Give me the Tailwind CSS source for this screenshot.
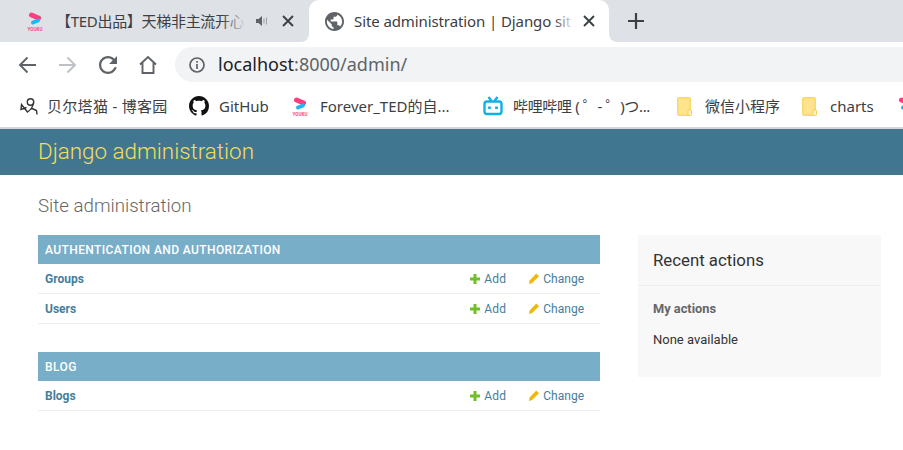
<!DOCTYPE html>
<html lang="en">
<head>
    <meta charset="utf-8"/>
    <title>Site administration | Django site admin</title>
    <script src="https://cdn.jsdelivr.net/npm/@tailwindcss/browser@4"></script>
</head>
<body class="w-[903px] h-[450px] overflow-hidden bg-white font-['Roboto',sans-serif]">
    <!-- tab strip -->
    <div class="h-[42px] bg-[#dee1e6] flex items-stretch font-['Noto_Sans','Noto_Sans_CJK_SC',sans-serif] text-[15px] text-[#3c4043]">
        <div class="w-[309px] flex items-center pl-[27px]">
            <svg class="w-[18px] h-[22px] shrink-0" viewBox="0 0 18 22">
                <path d="M4.500 5 L11.500 8" stroke="#ff3d7f" stroke-width="5" stroke-linecap="round"/>
                <path d="M11 10.500 L6 12.500" stroke="#1fb6f5" stroke-width="4" stroke-linecap="round"/>
                <text x="0.500" y="20.500" font-size="4.600" font-weight="700" fill="#f5488c" font-family="Roboto">YOUKU</text>
            </svg>
            <div class="relative ml-[11px] w-[190px] whitespace-nowrap tracking-[-0.3px]">【TED出品】天梯非主流开心
                <div class="absolute right-0 top-0 h-full w-6 bg-gradient-to-r from-transparent to-[#dee1e6]"></div>
            </div>
            <svg class="ml-[9px] w-[14px] h-[14px] shrink-0" viewBox="0 0 14 14" fill="#5f6368">
                <path d="M1 5h2.500L7 2v10L3.500 9H1z"/>
                <path d="M8.500 4.500h1v5h-1zM11 3.500h1v7h-1z" fill="#9aa0a6"/>
            </svg>
            <svg class="ml-[13px] w-[12px] h-[12px] shrink-0" viewBox="0 0 12 12" stroke="#3c4043" stroke-width="1.900">
                <path d="M1 1l10 10M11 1L1 11"/>
            </svg>
        </div>
        <!-- active tab -->
        <div class="relative w-[300px] bg-white rounded-t-[10px] flex items-center pl-[16px]">
            <div class="absolute -left-2 bottom-0 w-2 h-2 bg-white"><div class="w-full h-full bg-[#dee1e6] rounded-br-lg"></div></div>
            <div class="absolute -right-2 bottom-0 w-2 h-2 bg-white"><div class="w-full h-full bg-[#dee1e6] rounded-bl-lg"></div></div>
            <svg class="w-[19px] h-[19px] shrink-0" viewBox="2 2 20 20" fill="#5f6368">
                <path d="M12 2C6.480 2 2 6.480 2 12s4.480 10 10 10 10-4.480 10-10S17.520 2 12 2zm-1 17.930c-3.950-.490-7-3.850-7-7.930 0-.620.080-1.210.210-1.790L9 15v1c0 1.100.900 2 2 2v1.930zm6.900-2.540c-.260-.810-1-1.390-1.900-1.390h-1v-3c0-.550-.450-1-1-1H8v-2h2c.550 0 1-.450 1-1V7h2c1.100 0 2-.900 2-2v-.410c2.930 1.190 5 4.060 5 7.410 0 2.080-.800 3.970-2.100 5.390z"/>
            </svg>
            <div class="relative ml-[10px] w-[220px] whitespace-nowrap tracking-[-0.1px]">Site administration | Django sit
                <div class="absolute right-0 top-0 h-full w-5 bg-gradient-to-r from-transparent to-white"></div>
            </div>
            <svg class="ml-[9px] w-[12px] h-[12px] shrink-0" viewBox="0 0 12 12" stroke="#3c4043" stroke-width="1.900">
                <path d="M1 1l10 10M11 1L1 11"/>
            </svg>
        </div>
        <div class="flex items-center pl-[19px]">
            <svg class="w-[16px] h-[16px]" viewBox="0 0 16 16" stroke="#3c4043" stroke-width="2.200">
                <path d="M8 0v16M0 8h16"/>
            </svg>
        </div>
    </div>

    <!-- toolbar -->
    <div class="h-[45px] flex items-center pl-[18px]">
        <svg class="w-[19px] h-[18px] shrink-0" viewBox="0 0 19 18" fill="none" stroke="#5f6368" stroke-width="1.900">
            <path d="M18 9H2M9.500 1.500L2 9l7.500 7.500"/>
        </svg>
        <svg class="ml-[21px] w-[19px] h-[18px] shrink-0" viewBox="0 0 19 18" fill="none" stroke="#bdc1c6" stroke-width="1.900">
            <path d="M1 9h16M9.500 1.500L17 9l-7.500 7.500"/>
        </svg>
        <svg class="ml-[22px] w-[18px] h-[18px] shrink-0" viewBox="4 4 16 16" fill="#5f6368">
            <path d="M17.650 6.350C16.200 4.900 14.210 4 12 4c-4.420 0-7.990 3.580-7.990 8s3.570 8 7.990 8c3.730 0 6.840-2.550 7.730-6h-2.080c-.820 2.330-3.040 4-5.650 4-3.310 0-6-2.690-6-6s2.690-6 6-6c1.660 0 3.140.690 4.220 1.780L13 11h7V4l-2.350 2.350z"/>
        </svg>
        <svg class="ml-[22px] w-[18px] h-[19px] shrink-0" viewBox="0 0 18 19" fill="none" stroke="#5f6368" stroke-width="1.900">
            <path d="M1 9.500L9 2l8 7.500M3.500 8v10h11V8"/>
        </svg>
        <div class="ml-[18px] h-[35px] flex-1 mr-[-40px] bg-[#f1f3f4] rounded-full flex items-center pl-[14px]">
            <svg class="w-[16px] h-[16px] shrink-0" viewBox="0 0 16 16" fill="none" stroke="#5f6368" stroke-width="1.700">
                <circle cx="8" cy="8" r="7"/>
                <path d="M8 7v5M8 4v1.800"/>
            </svg>
            <span class="ml-[13px] text-[18px] font-['Noto_Sans',sans-serif] text-[#202124]">localhost<span class="text-[#5f6368]">:8000/admin/</span></span>
        </div>
    </div>

    <!-- bookmarks bar -->
    <div class="h-[42px] pb-[2px] border-b-2 border-[#d6d6d6] flex items-center overflow-hidden whitespace-nowrap font-['Noto_Sans','Noto_Sans_CJK_SC',sans-serif] text-[15px] text-[#3c4043]">
        <svg class="ml-[20px] w-[18px] h-[18px] shrink-0" viewBox="0 0 18 18" fill="none" stroke="#333" stroke-width="1.400">
            <circle cx="10.500" cy="5" r="3.200"/>
            <path d="M13.600 5.500C13 10 10.500 13 7.500 15L1.500 7.500 1 12.500l5.500-2M11 11l5.500 2.500.5 4"/>
        </svg>
        <span class="ml-[9px] w-[121px] shrink-0 tracking-[0.3px]">贝尔塔猫 - 博客园</span>
        <svg class="ml-[21px] w-[20px] h-[20px] shrink-0" viewBox="0 0 16 16" fill="#111">
            <path d="M8 0C3.580 0 0 3.580 0 8c0 3.540 2.290 6.530 5.470 7.590.400.070.550-.170.550-.380 0-.190-.010-.820-.010-1.490-2.010.370-2.530-.490-2.690-.940-.090-.230-.480-.940-.820-1.130-.280-.150-.680-.520-.010-.530.630-.010 1.080.580 1.230.820.720 1.210 1.870.870 2.330.660.070-.520.280-.870.510-1.070-1.780-.200-3.640-.890-3.640-3.950 0-.870.310-1.590.820-2.150-.080-.200-.360-1.020.080-2.120 0 0 .670-.210 2.200.820.640-.180 1.320-.270 2-.270s1.360.090 2 .270c1.530-1.040 2.200-.820 2.200-.820.440 1.100.160 1.920.080 2.120.510.560.820 1.270.820 2.150 0 3.070-1.870 3.750-3.650 3.950.290.250.540.730.540 1.480 0 1.070-.010 1.930-.010 2.200 0 .210.150.460.550.380A8.013 8.013 0 0016 8c0-4.420-3.580-8-8-8z"/>
        </svg>
        <span class="ml-[10px] w-[51px] shrink-0">GitHub</span>
        <svg class="ml-[22px] w-[18px] h-[22px] shrink-0" viewBox="0 0 18 22">
            <path d="M4.500 5 L11.500 8" stroke="#ff3d7f" stroke-width="5" stroke-linecap="round"/>
            <path d="M11 10.500 L6 12.500" stroke="#1fb6f5" stroke-width="4" stroke-linecap="round"/>
            <text x="0.500" y="20.500" font-size="4.600" font-weight="700" fill="#f5488c" font-family="Roboto">YOUKU</text>
        </svg>
        <span class="ml-[10px] w-[131px] shrink-0">Forever_TED的自...</span>
        <svg class="ml-[32px] w-[20px] h-[20px] shrink-0" viewBox="0 0 20 20" fill="none" stroke="#0fb0e8" stroke-width="2.400">
            <rect x="1.500" y="5.500" width="17" height="12.500" rx="2.500"/>
            <path d="M5.500 1l3 4M14.500 1l-3 4"/>
            <path d="M6.500 10.500v2.500M13.500 10.500v2.500" stroke-width="2.800"/>
        </svg>
        <span class="ml-[10px] w-[138px] shrink-0 tracking-[-0.35px]">哔哩哔哩 ( ゜- ゜)つ...</span>
        <svg class="ml-[26px] w-[15px] h-[19px] shrink-0" viewBox="0 0 15 19">
            <rect x="0.750" y="0.750" width="12.500" height="17.500" rx="1.500" fill="#ffe48d" stroke="#f8d866" stroke-width="1.500"/>
            <rect x="11" y="13" width="3.500" height="5.500" rx="1" fill="#fff3c4" stroke="#f5cf55"/>
        </svg>
        <span class="ml-[13px] w-[75px] shrink-0">微信小程序</span>
        <svg class="ml-[22px] w-[15px] h-[19px] shrink-0" viewBox="0 0 15 19">
            <rect x="0.750" y="0.750" width="12.500" height="17.500" rx="1.500" fill="#ffe48d" stroke="#f8d866" stroke-width="1.500"/>
            <rect x="11" y="13" width="3.500" height="5.500" rx="1" fill="#fff3c4" stroke="#f5cf55"/>
        </svg>
        <span class="ml-[13px] w-[43px] shrink-0">charts</span>
        <svg class="ml-[24px] w-[18px] h-[22px] shrink-0" viewBox="0 0 18 22">
            <path d="M4.500 5 L11.500 8" stroke="#ff3d7f" stroke-width="5" stroke-linecap="round"/>
            <path d="M11 10.500 L6 12.500" stroke="#1fb6f5" stroke-width="4" stroke-linecap="round"/>
        </svg>
    </div>

    <!-- django header -->
    <div class="h-[46px] bg-[#417690] flex items-center pl-[38px]">
        <h1 class="text-[22.400px] font-light text-[#f5dd5d]">Django administration</h1>
    </div>

    <!-- content -->
    <div class="pl-[38px] pt-[19px]">
        <h2 class="text-[18.700px] leading-[25px] font-light text-[#666]">Site administration</h2>
        <div class="mt-[16px] flex items-start">
            <div class="w-[562px]">
                <div class="h-[29px] bg-[#79aec8] pl-[7px] pt-px flex items-center text-[12px] font-medium tracking-[0.4px] text-white">AUTHENTICATION AND AUTHORIZATION</div>
                <div class="h-[30px] border-b border-[#eee] pl-[7px] pr-[16px] flex items-center text-[12px] text-[#447e9b]">
                    <span class="font-bold">Groups</span>
                    <span class="ml-auto flex items-center">
                        <svg class="w-[10px] h-[10px]" viewBox="0 0 10 10" fill="#70bf2b"><path d="M3.500 0h3v3.500H10v3H6.500V10h-3V6.500H0v-3h3.500z"/></svg>
                        <span class="ml-[4px] tracking-[0.2px]">Add</span>
                    </span>
                    <span class="ml-[23px] flex items-center">
                        <svg class="w-[10px] h-[11px]" viewBox="0 0 10 11" fill="#efb80b"><path d="M7.200 .5L10 3.200 3.200 10 0 11l.6-3.500z"/></svg>
                        <span class="ml-[4px]">Change</span>
                    </span>
                </div>
                <div class="h-[30px] border-b border-[#eee] pl-[7px] pr-[16px] flex items-center text-[12px] text-[#447e9b]">
                    <span class="font-bold">Users</span>
                    <span class="ml-auto flex items-center">
                        <svg class="w-[10px] h-[10px]" viewBox="0 0 10 10" fill="#70bf2b"><path d="M3.500 0h3v3.500H10v3H6.500V10h-3V6.500H0v-3h3.500z"/></svg>
                        <span class="ml-[4px] tracking-[0.2px]">Add</span>
                    </span>
                    <span class="ml-[23px] flex items-center">
                        <svg class="w-[10px] h-[11px]" viewBox="0 0 10 11" fill="#efb80b"><path d="M7.200 .5L10 3.200 3.200 10 0 11l.6-3.500z"/></svg>
                        <span class="ml-[4px]">Change</span>
                    </span>
                </div>
                <div class="mt-[28px] h-[29px] bg-[#79aec8] pl-[7px] pt-px flex items-center text-[12px] font-medium tracking-[0.4px] text-white">BLOG</div>
                <div class="h-[30px] border-b border-[#eee] pl-[7px] pr-[16px] flex items-center text-[12px] text-[#447e9b]">
                    <span class="font-bold">Blogs</span>
                    <span class="ml-auto flex items-center">
                        <svg class="w-[10px] h-[10px]" viewBox="0 0 10 10" fill="#70bf2b"><path d="M3.500 0h3v3.500H10v3H6.500V10h-3V6.500H0v-3h3.500z"/></svg>
                        <span class="ml-[4px] tracking-[0.2px]">Add</span>
                    </span>
                    <span class="ml-[23px] flex items-center">
                        <svg class="w-[10px] h-[11px]" viewBox="0 0 10 11" fill="#efb80b"><path d="M7.200 .5L10 3.200 3.200 10 0 11l.6-3.500z"/></svg>
                        <span class="ml-[4px]">Change</span>
                    </span>
                </div>
            </div>
            <!-- recent actions -->
            <div class="ml-[38px] w-[243px] h-[142px] bg-[#f8f8f8]">
                <div class="h-[51px] border-b border-[#eee] pl-[15px] pt-[1px] flex items-center text-[16.800px] text-[#333]">Recent actions</div>
                <div class="pl-[15px] pt-[15px] text-[12.800px] font-bold text-[#666] leading-[15px]">My actions</div>
                <div class="pl-[15px] pt-[16px] text-[13px] text-[#333] leading-[15px]">None available</div>
            </div>
        </div>
    </div>
</body>
</html>
